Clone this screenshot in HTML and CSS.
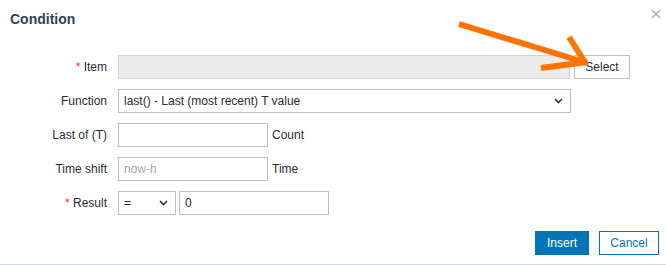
FILE: index.html
```html
<!DOCTYPE html>
<html>
<head>
<meta charset="utf-8">
<link rel="stylesheet" href="styles.css">
</head>
<body>
<div class="dialog">
  <div class="header">
    <h4 class="title">Condition</h4>
    <button class="close" aria-label="Close">
      <svg width="10" height="10" viewBox="0 0 10 10"><path d="M1 1L9 9M9 1L1 9" stroke="#a4aab0" stroke-width="1.3" fill="none"/></svg>
    </button>
  </div>
  <div class="form">
    <div class="label"><span class="req">*</span> Item</div>
    <div class="field">
      <div class="input wide disabled"></div>
      <button class="btn-alt">Select</button>
    </div>

    <div class="label">Function</div>
    <div class="field">
      <div class="input wide select">
        <span>last() - Last (most recent) T value</span>
        <svg class="chev" width="9" height="6" viewBox="0 0 9 6"><path d="M1 1L4.5 4.5L8 1" stroke="#333" stroke-width="1.6" fill="none"/></svg>
      </div>
    </div>

    <div class="label">Last of (T)</div>
    <div class="field">
      <div class="input mid"></div>
      <span class="suffix">Count</span>
    </div>

    <div class="label">Time shift</div>
    <div class="field">
      <div class="input mid"><span class="ph">now-h</span></div>
      <span class="suffix">Time</span>
    </div>

    <div class="label"><span class="req">*</span> Result</div>
    <div class="field">
      <div class="input small select">
        <span>=</span>
        <svg class="chev" width="9" height="6" viewBox="0 0 9 6"><path d="M1 1L4.5 4.5L8 1" stroke="#333" stroke-width="1.6" fill="none"/></svg>
      </div>
      <div class="input mid gap3"><span>0</span></div>
    </div>
  </div>
  <div class="footer">
    <button class="btn primary">Insert</button>
    <button class="btn secondary">Cancel</button>
  </div>
  <svg class="arrow" width="666" height="100" viewBox="0 0 666 100">
    <g stroke="#ff7300" stroke-width="6" stroke-linecap="butt" fill="none">
      <path d="M459 24L587 63"/>
      <path d="M569 37L586 64"/>
      <path d="M541 68L587 62"/>
    </g>
  </svg>
</div>
</body>
</html>
```

FILE: styles.css
```css
* { box-sizing: border-box; }
html, body { margin: 0; padding: 0; background: #fff; }
body {
  font-family: "Liberation Sans", Arial, sans-serif;
  font-size: 12px;
  color: #1f2c33;
  width: 666px;
  height: 265px;
  overflow: hidden;
}
.dialog {
  position: relative;
  height: 265px;
  border-bottom: 1px solid #d3dadd;
}
.header {
  display: flex;
  justify-content: space-between;
  align-items: flex-start;
  padding: 10px 5px 0 10px;
  height: 55px;
}
.title {
  margin: 0;
  font-size: 14px;
  line-height: 18px;
  font-weight: bold;
  color: #34424e;
}
.close {
  border: 0;
  background: none;
  padding: 0;
  margin-top: -4px;
  width: 10px;
  height: 10px;
  display: flex;
  transform: translateY(3px);
}
.form {
  display: grid;
  grid-template-columns: 107px auto;
  column-gap: 11px;
  row-gap: 10px;
  grid-auto-rows: 24px;
}
.label {
  text-align: right;
  line-height: 24px;
  white-space: nowrap;
}
.req { color: #e33734; }
.field {
  display: flex;
  align-items: center;
}
.input {
  height: 24px;
  border: 1px solid #bdbdbd;
  background: #fff;
  padding: 0 5px;
  display: flex;
  align-items: center;
  line-height: 22px;
}
.input.wide { width: 453px; }
.input.disabled { width: 452px; background: #ebebeb; border-color: #d2d2d2; }
.input.mid { width: 150px; }
.input.small { width: 58px; }
.gap3 { margin-left: 3px; }
.select { justify-content: space-between; padding-right: 7px; }
.chev { flex: none; }
.ph { color: #a6a6a6; }
.suffix { margin-left: 4px; }
.btn-alt {
  margin-left: 4px;
  height: 24px;
  width: 56px;
  border: 1px solid #bdbdbd;
  background: #fff;
  font-family: inherit;
  font-size: 12px;
  color: #1f2c33;
  padding: 0;
}
.footer {
  display: flex;
  justify-content: flex-end;
  gap: 10px;
  padding: 16px 7px 0 0;
}
.btn {
  height: 24px;
  font-family: inherit;
  font-size: 12px;
  padding: 0;
  border: 1px solid #0275b8;
}
.primary { width: 54px; background: #0275b8; color: #fff; }
.secondary { width: 60px; background: #fff; color: #0275b8; }
.arrow {
  position: absolute;
  left: 0;
  top: 0;
  pointer-events: none;
}
```
